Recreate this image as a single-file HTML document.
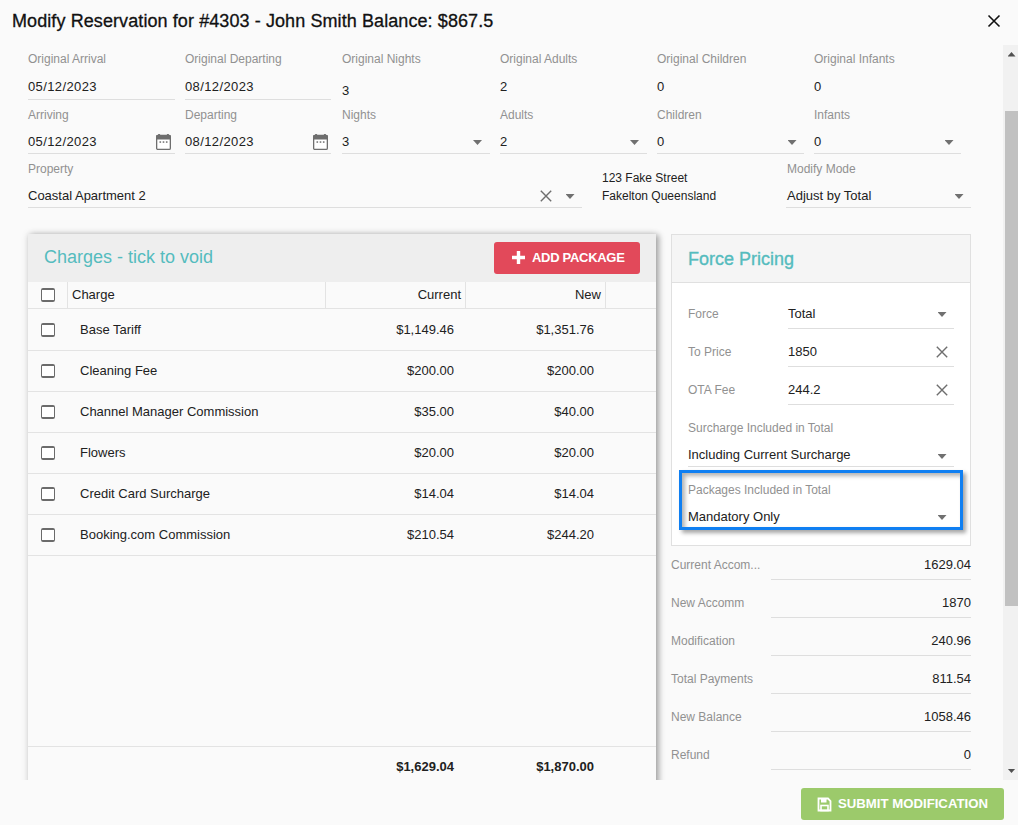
<!DOCTYPE html>
<html><head><meta charset="utf-8">
<style>
*{box-sizing:border-box;margin:0;padding:0}
html,body{width:1018px;height:825px;overflow:hidden;background:#fafafa;font-family:"Liberation Sans",sans-serif;color:#212121}
.a{position:absolute;white-space:nowrap;line-height:15px}
.title{left:12px;top:11px;font-size:18px;line-height:20px;color:#111;letter-spacing:0.09px;-webkit-text-stroke:0.3px #111}
.lbl{font-size:12px;color:#919191}
.val{font-size:13px;color:#212121}
.ul{position:absolute;height:1px;background:#dedede}
.arrow{position:absolute;width:9px;height:5px;background:#707070;clip-path:polygon(0 0,100% 0,50% 100%)}
.cal{position:absolute;width:15px;height:16px}
.xi{position:absolute;width:12px;height:12px}
.panel{position:absolute;left:28px;top:234px;width:628px;height:560px;background:#fafafa;box-shadow:0 0 7px rgba(0,0,0,.13), 3px 1px 6px rgba(0,0,0,.3)}
.cb{position:absolute;width:13.5px;height:13.5px;border-style:solid;border-color:#6b6b6b;border-width:2px 1.6px;border-radius:2px;background:#fff}
.hl{position:absolute;height:1px;background:#e3e3e3}
.vl{position:absolute;width:1px;background:#e3e3e3}
</style></head><body>
<div class="a title">Modify Reservation for #4303 - John Smith Balance: $867.5</div>
<svg class="a" style="left:987px;top:14px" width="14" height="14" viewBox="0 0 14 14"><path d="M1.5 1.5L12.5 12.5M12.5 1.5L1.5 12.5" stroke="#111" stroke-width="1.6"/></svg>

<!-- row 1 -->
<div class="a lbl" style="left:28px;top:52px">Original Arrival</div>
<div class="a val" style="left:28px;top:79px;letter-spacing:0.38px">05/12/2023</div>
<div class="ul" style="left:28px;top:99px;width:147px"></div>
<div class="a lbl" style="left:185px;top:52px">Original Departing</div>
<div class="a val" style="left:185px;top:79px;letter-spacing:0.38px">08/12/2023</div>
<div class="ul" style="left:185px;top:99px;width:146px"></div>
<div class="a lbl" style="left:342px;top:52px">Original Nights</div>
<div class="a val" style="left:342px;top:83px">3</div>
<div class="a lbl" style="left:500px;top:52px">Original Adults</div>
<div class="a val" style="left:500px;top:79px">2</div>
<div class="a lbl" style="left:657px;top:52px">Original Children</div>
<div class="a val" style="left:657px;top:79px">0</div>
<div class="a lbl" style="left:814px;top:52px">Original Infants</div>
<div class="a val" style="left:814px;top:79px">0</div>

<!-- row 2 -->
<div class="a lbl" style="left:28px;top:108px">Arriving</div>
<div class="a val" style="left:28px;top:134px;letter-spacing:0.38px">05/12/2023</div>
<div class="ul" style="left:28px;top:153px;width:147px"></div>
<svg class="cal" style="left:156px;top:134px" viewBox="0 0 15 16"><rect x="0.65" y="1.3" width="13.7" height="14.05" rx="1.2" fill="#fff" stroke="#6e6e6e" stroke-width="1.3"/><rect x="0.2" y="1" width="14.6" height="4.6" rx="1" fill="#6e6e6e"/><rect x="2" y="0" width="2.2" height="2" rx="0.8" fill="#6e6e6e"/><rect x="10.8" y="0" width="2.2" height="2" rx="0.8" fill="#6e6e6e"/><rect x="3.5" y="7.3" width="1.6" height="1.5" fill="#6e6e6e"/><rect x="6.7" y="7.3" width="1.6" height="1.5" fill="#6e6e6e"/><rect x="9.9" y="7.3" width="1.6" height="1.5" fill="#6e6e6e"/></svg>
<div class="a lbl" style="left:185px;top:108px">Departing</div>
<div class="a val" style="left:185px;top:134px;letter-spacing:0.38px">08/12/2023</div>
<div class="ul" style="left:185px;top:153px;width:146px"></div>
<svg class="cal" style="left:313px;top:134px" viewBox="0 0 15 16"><rect x="0.65" y="1.3" width="13.7" height="14.05" rx="1.2" fill="#fff" stroke="#6e6e6e" stroke-width="1.3"/><rect x="0.2" y="1" width="14.6" height="4.6" rx="1" fill="#6e6e6e"/><rect x="2" y="0" width="2.2" height="2" rx="0.8" fill="#6e6e6e"/><rect x="10.8" y="0" width="2.2" height="2" rx="0.8" fill="#6e6e6e"/><rect x="3.5" y="7.3" width="1.6" height="1.5" fill="#6e6e6e"/><rect x="6.7" y="7.3" width="1.6" height="1.5" fill="#6e6e6e"/><rect x="9.9" y="7.3" width="1.6" height="1.5" fill="#6e6e6e"/></svg>
<div class="a lbl" style="left:342px;top:108px">Nights</div>
<div class="a val" style="left:342px;top:134px">3</div>
<div class="ul" style="left:342px;top:153px;width:148px"></div>
<div class="arrow" style="left:473px;top:140px"></div>
<div class="a lbl" style="left:500px;top:108px">Adults</div>
<div class="a val" style="left:500px;top:134px">2</div>
<div class="ul" style="left:500px;top:153px;width:147px"></div>
<div class="arrow" style="left:630px;top:140px"></div>
<div class="a lbl" style="left:657px;top:108px">Children</div>
<div class="a val" style="left:657px;top:134px">0</div>
<div class="ul" style="left:657px;top:153px;width:147px"></div>
<div class="arrow" style="left:787.5px;top:140px"></div>
<div class="a lbl" style="left:814px;top:108px">Infants</div>
<div class="a val" style="left:814px;top:134px">0</div>
<div class="ul" style="left:814px;top:153px;width:147px"></div>
<div class="arrow" style="left:944.5px;top:140px"></div>

<!-- row 3 -->
<div class="a lbl" style="left:28px;top:162px">Property</div>
<div class="a val" style="left:28px;top:188px">Coastal Apartment 2</div>
<div class="ul" style="left:28px;top:207px;width:554px"></div>
<svg class="xi" style="left:540px;top:190px" viewBox="0 0 12 12"><path d="M0.8 0.8L11.2 11.2M11.2 0.8L0.8 11.2" stroke="#6e6e6e" stroke-width="1.4"/></svg>
<div class="arrow" style="left:565.5px;top:194px"></div>
<div class="a val" style="left:602px;top:171px;font-size:12px">123 Fake Street</div>
<div class="a val" style="left:602px;top:189px;font-size:12px">Fakelton Queensland</div>
<div class="a lbl" style="left:787px;top:162px">Modify Mode</div>
<div class="a val" style="left:787px;top:188px">Adjust by Total</div>
<div class="ul" style="left:786px;top:207px;width:185px"></div>
<div class="arrow" style="left:954.5px;top:194px"></div>

<!-- scroll content clip -->
<div style="position:absolute;left:0;top:45px;width:1003px;height:735px;overflow:hidden">
 <div style="position:absolute;left:0;top:-45px;width:1003px;height:900px">
  <!-- charges panel -->
  <div class="panel">
    <div style="position:absolute;left:0;top:0;width:628px;height:48px;background:#eeeeee"></div>
    <div class="a" style="left:16px;top:13px;font-size:18px;line-height:20px;color:#55bcbe">Charges - tick to void</div>
    <div style="position:absolute;left:466px;top:8px;width:146px;height:32px;background:#e2495a;border-radius:3px"></div>
    <svg style="position:absolute;left:484px;top:17px" width="13" height="13" viewBox="0 0 13 13"><path d="M6.5 0V13M0 6.5H13" stroke="#fff" stroke-width="3.4"/></svg>
    <div class="a" style="left:504px;top:16px;font-size:13px;font-weight:bold;color:#fff;letter-spacing:-0.3px">ADD PACKAGE</div>
    <!-- header -->
    <div class="hl" style="left:0;top:74px;width:628px"></div>
    <div class="vl" style="left:39px;top:48px;height:26px"></div>
    <div class="vl" style="left:297px;top:48px;height:26px"></div>
    <div class="vl" style="left:437px;top:48px;height:26px"></div>
    <div class="vl" style="left:577px;top:48px;height:26px"></div>
    <div class="cb" style="left:13px;top:54px"></div>
    <div class="a val" style="left:44px;top:53px">Charge</div>
    <div class="a val" style="left:297px;top:53px;width:136px;text-align:right">Current</div>
    <div class="a val" style="left:437px;top:53px;width:136px;text-align:right">New</div>
    <!-- rows -->
    <div class="cb" style="left:13px;top:89px"></div><div class="a val" style="left:52px;top:88px">Base Tariff</div>
    <div class="a val" style="left:297px;top:88px;width:129px;text-align:right">$1,149.46</div><div class="a val" style="left:437px;top:88px;width:129px;text-align:right">$1,351.76</div>
    <div class="hl" style="left:0;top:116px;width:628px"></div>
    <div class="cb" style="left:13px;top:130px"></div><div class="a val" style="left:52px;top:129px">Cleaning Fee</div>
    <div class="a val" style="left:297px;top:129px;width:129px;text-align:right">$200.00</div><div class="a val" style="left:437px;top:129px;width:129px;text-align:right">$200.00</div>
    <div class="hl" style="left:0;top:157px;width:628px"></div>
    <div class="cb" style="left:13px;top:171px"></div><div class="a val" style="left:52px;top:170px">Channel Manager Commission</div>
    <div class="a val" style="left:297px;top:170px;width:129px;text-align:right">$35.00</div><div class="a val" style="left:437px;top:170px;width:129px;text-align:right">$40.00</div>
    <div class="hl" style="left:0;top:198px;width:628px"></div>
    <div class="cb" style="left:13px;top:212px"></div><div class="a val" style="left:52px;top:211px">Flowers</div>
    <div class="a val" style="left:297px;top:211px;width:129px;text-align:right">$20.00</div><div class="a val" style="left:437px;top:211px;width:129px;text-align:right">$20.00</div>
    <div class="hl" style="left:0;top:239px;width:628px"></div>
    <div class="cb" style="left:13px;top:253px"></div><div class="a val" style="left:52px;top:252px">Credit Card Surcharge</div>
    <div class="a val" style="left:297px;top:252px;width:129px;text-align:right">$14.04</div><div class="a val" style="left:437px;top:252px;width:129px;text-align:right">$14.04</div>
    <div class="hl" style="left:0;top:280px;width:628px"></div>
    <div class="cb" style="left:13px;top:294px"></div><div class="a val" style="left:52px;top:293px">Booking.com Commission</div>
    <div class="a val" style="left:297px;top:293px;width:129px;text-align:right">$210.54</div><div class="a val" style="left:437px;top:293px;width:129px;text-align:right">$244.20</div>
    <div class="hl" style="left:0;top:321px;width:628px"></div>
    <!-- footer totals -->
    <div class="hl" style="left:0;top:512px;width:628px"></div>
    <div class="a val" style="left:297px;top:525px;width:129px;text-align:right;font-weight:bold">$1,629.04</div>
    <div class="a val" style="left:437px;top:525px;width:129px;text-align:right;font-weight:bold">$1,870.00</div>
  </div>

  <!-- force pricing -->
  <div style="position:absolute;left:671px;top:234px;width:300px;height:312px;background:#fff;border:1px solid #e0e0e0">
    <div style="position:absolute;left:0;top:0;width:298px;height:48px;background:#f5f5f5;border-bottom:1px solid #e0e0e0"></div>
    <div class="a" style="left:16px;top:14px;font-size:18px;line-height:20px;color:#55bcbe;-webkit-text-stroke:0.35px #55bcbe">Force Pricing</div>
  </div>
  <div class="a lbl" style="left:688px;top:307px">Force</div>
  <div class="a val" style="left:788px;top:306px">Total</div>
  <div class="ul" style="left:788px;top:328px;width:166px"></div>
  <div class="arrow" style="left:937.5px;top:312px"></div>
  <div class="a lbl" style="left:688px;top:345px">To Price</div>
  <div class="a val" style="left:788px;top:344px">1850</div>
  <div class="ul" style="left:788px;top:366px;width:166px"></div>
  <svg class="xi" style="left:936px;top:346px" viewBox="0 0 12 12"><path d="M0.8 0.8L11.2 11.2M11.2 0.8L0.8 11.2" stroke="#6e6e6e" stroke-width="1.4"/></svg>
  <div class="a lbl" style="left:688px;top:383px">OTA Fee</div>
  <div class="a val" style="left:788px;top:382px">244.2</div>
  <div class="ul" style="left:788px;top:404px;width:166px"></div>
  <svg class="xi" style="left:936px;top:384px" viewBox="0 0 12 12"><path d="M0.8 0.8L11.2 11.2M11.2 0.8L0.8 11.2" stroke="#6e6e6e" stroke-width="1.4"/></svg>
  <div class="a lbl" style="left:688px;top:421px">Surcharge Included in Total</div>
  <div class="a val" style="left:688px;top:447px">Including Current Surcharge</div>
  <div class="ul" style="left:688px;top:466px;width:266px"></div>
  <div class="arrow" style="left:937.5px;top:454px"></div>
  <div style="position:absolute;left:679px;top:470px;width:284px;height:60px;border:3px solid #0f7ff2;box-shadow:3px 3px 4px rgba(0,0,0,.35), inset 3px 3px 4px rgba(0,0,0,.3)"></div>
  <div class="a lbl" style="left:688px;top:483px">Packages Included in Total</div>
  <div class="a val" style="left:688px;top:509px">Mandatory Only</div>
  <div class="arrow" style="left:937.5px;top:515px"></div>

  <!-- summary -->
  <div class="a lbl" style="left:671px;top:558px">Current Accom...</div>
  <div class="a val" style="left:771px;top:557px;width:200px;text-align:right">1629.04</div>
  <div class="ul" style="left:771px;top:579px;width:200px"></div>
  <div class="a lbl" style="left:671px;top:596px">New Accomm</div>
  <div class="a val" style="left:771px;top:595px;width:200px;text-align:right">1870</div>
  <div class="ul" style="left:771px;top:617px;width:200px"></div>
  <div class="a lbl" style="left:671px;top:634px">Modification</div>
  <div class="a val" style="left:771px;top:633px;width:200px;text-align:right">240.96</div>
  <div class="ul" style="left:771px;top:655px;width:200px"></div>
  <div class="a lbl" style="left:671px;top:672px">Total Payments</div>
  <div class="a val" style="left:771px;top:671px;width:200px;text-align:right">811.54</div>
  <div class="ul" style="left:771px;top:693px;width:200px"></div>
  <div class="a lbl" style="left:671px;top:710px">New Balance</div>
  <div class="a val" style="left:771px;top:709px;width:200px;text-align:right">1058.46</div>
  <div class="ul" style="left:771px;top:731px;width:200px"></div>
  <div class="a lbl" style="left:671px;top:748px">Refund</div>
  <div class="a val" style="left:771px;top:747px;width:200px;text-align:right">0</div>
  <div class="ul" style="left:771px;top:769px;width:200px"></div>
 </div>
</div>

<!-- scrollbar -->
<div style="position:absolute;left:1003px;top:45px;width:15px;height:735px;background:#f1f1f1"></div>
<div style="position:absolute;left:1005px;top:111px;width:13px;height:495px;background:#c1c1c1"></div>
<div style="position:absolute;left:1007.5px;top:52px;width:8px;height:4.5px;background:#505050;clip-path:polygon(50% 0,100% 100%,0 100%)"></div>
<div style="position:absolute;left:1007.5px;top:768.5px;width:8px;height:4.5px;background:#505050;clip-path:polygon(0 0,100% 0,50% 100%)"></div>

<!-- submit -->
<div style="position:absolute;left:801px;top:788px;width:203px;height:32px;background:#9cca6b;border-radius:3px"></div>
<svg style="position:absolute;left:817px;top:797px" width="15" height="15" viewBox="0 0 15 15"><path d="M1.5 1.5H11L13.5 4V13.5H1.5Z" fill="none" stroke="#fff" stroke-width="1.8"/><rect x="4" y="2" width="5.5" height="3.5" fill="#fff"/><rect x="4" y="8.5" width="7" height="5" fill="none" stroke="#fff" stroke-width="1.6"/></svg>
<div class="a" style="left:838px;top:796px;font-size:13.2px;font-weight:bold;color:#fff;letter-spacing:0px">SUBMIT MODIFICATION</div>
</body></html>
